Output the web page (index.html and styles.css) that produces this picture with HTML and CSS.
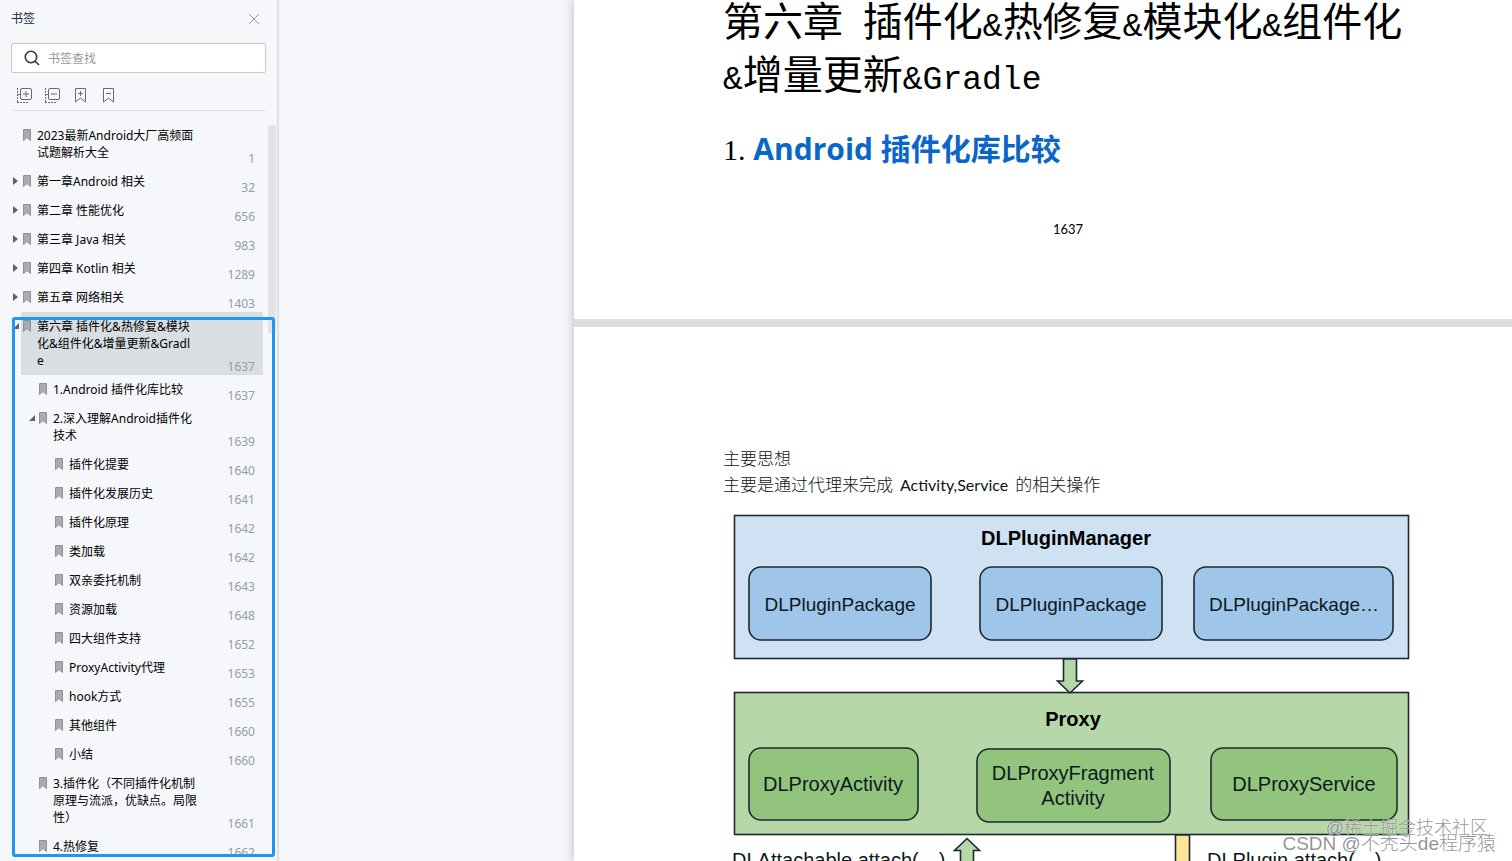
FILE: index.html
```
<!DOCTYPE html>
<html lang="zh-CN">
  <head>
    <meta charset="utf-8">
    <meta name="viewport" content="width=device-width,initial-scale=1.0">
    <title>书签</title>
    <link rel="stylesheet" href="styles.css">
  </head>
  <body>
    <!-- shared bookmark shape -->
    <svg width="0" height="0" class="defs" aria-hidden="true">
      <symbol id="mark" viewBox="0 0 8 12">
        <path d="M0.5 0.5h7v11l-3.5-3-3.5 3z" fill="#a9abaf" stroke="#8f9195"/>
      </symbol>
    </svg>

    <aside class="sidebar">
      <header class="side-head">
        <h2>书签</h2>
        <button class="icon-btn" aria-label="关闭">
          <svg width="12" height="12" viewBox="0 0 12 12" fill="none" stroke="#9b9da1"><path d="M1 1l10 10M11 1L1 11"/></svg>
        </button>
      </header>

      <label class="search">
        <svg width="16" height="16" viewBox="0 0 16 16" fill="none" stroke="#333" stroke-width="1.6"><circle cx="7" cy="7" r="5.7"/><path d="M11 11l4 4"/></svg>
        <input type="text" placeholder="书签查找" aria-label="书签查找">
      </label>

      <div class="tools">
        <button class="icon-btn" aria-label="展开">
          <svg width="15" height="15" viewBox="0 0 15 15" fill="none" stroke="#686b70"><rect x="3.5" y="0.5" width="11" height="11" rx="1.5"/><path d="M6 6h6M9 3v6"/><path d="M0.5 0v15M0 14.5h11M1 6.5h2" stroke-dasharray="2 1"/></svg>
        </button>
        <button class="icon-btn" aria-label="收起">
          <svg width="15" height="15" viewBox="0 0 15 15" fill="none" stroke="#686b70"><rect x="3.5" y="0.5" width="11" height="11" rx="1.5"/><path d="M6 6h6"/><path d="M0.5 0v15M0 14.5h11M1 6.5h2" stroke-dasharray="2 1"/></svg>
        </button>
        <button class="icon-btn" aria-label="添加书签">
          <svg width="15" height="15" viewBox="0 0 15 15" fill="none" stroke="#686b70"><path d="M2.5 0.5h10v13.5l-5-4-5 4z"/><path d="M5 5.5h5M7.5 3v5"/></svg>
        </button>
        <button class="icon-btn" aria-label="删除书签">
          <svg width="15" height="15" viewBox="0 0 15 15" fill="none" stroke="#686b70"><path d="M2.5 0.5h10v13.5l-5-4-5 4z"/><path d="M5 5.5h5"/></svg>
        </button>
      </div>

      <div class="tree-wrap">
        <ul class="tree">
          <li><a href="#"><svg><use href="#mark"/></svg><span>2023最新Android大厂高频面<br>试题解析大全</span><b>1</b></a></li>
          <li><button class="toggle" aria-label="展开"></button><a href="#"><svg><use href="#mark"/></svg><span>第一章Android 相关</span><b>32</b></a></li>
          <li><button class="toggle" aria-label="展开"></button><a href="#"><svg><use href="#mark"/></svg><span>第二章 性能优化</span><b>656</b></a></li>
          <li><button class="toggle" aria-label="展开"></button><a href="#"><svg><use href="#mark"/></svg><span>第三章 Java 相关</span><b>983</b></a></li>
          <li><button class="toggle" aria-label="展开"></button><a href="#"><svg><use href="#mark"/></svg><span>第四章 Kotlin 相关</span><b>1289</b></a></li>
          <li><button class="toggle" aria-label="展开"></button><a href="#"><svg><use href="#mark"/></svg><span>第五章 网络相关</span><b>1403</b></a></li>
          <li><button class="toggle open" aria-label="收起"></button><a href="#" class="selected"><svg><use href="#mark"/></svg><span>第六章 插件化&amp;热修复&amp;模块<br>化&amp;组件化&amp;增量更新&amp;Gradl<br>e</span><b>1637</b></a></li>
          <li class="l2"><a href="#"><svg><use href="#mark"/></svg><span>1.Android 插件化库比较</span><b>1637</b></a></li>
          <li class="l2"><button class="toggle open" aria-label="收起"></button><a href="#"><svg><use href="#mark"/></svg><span>2.深入理解Android插件化<br>技术</span><b>1639</b></a></li>
          <li class="l3"><a href="#"><svg><use href="#mark"/></svg><span>插件化提要</span><b>1640</b></a></li>
          <li class="l3"><a href="#"><svg><use href="#mark"/></svg><span>插件化发展历史</span><b>1641</b></a></li>
          <li class="l3"><a href="#"><svg><use href="#mark"/></svg><span>插件化原理</span><b>1642</b></a></li>
          <li class="l3"><a href="#"><svg><use href="#mark"/></svg><span>类加载</span><b>1642</b></a></li>
          <li class="l3"><a href="#"><svg><use href="#mark"/></svg><span>双亲委托机制</span><b>1643</b></a></li>
          <li class="l3"><a href="#"><svg><use href="#mark"/></svg><span>资源加载</span><b>1648</b></a></li>
          <li class="l3"><a href="#"><svg><use href="#mark"/></svg><span>四大组件支持</span><b>1652</b></a></li>
          <li class="l3"><a href="#"><svg><use href="#mark"/></svg><span>ProxyActivity代理</span><b>1653</b></a></li>
          <li class="l3"><a href="#"><svg><use href="#mark"/></svg><span>hook方式</span><b>1655</b></a></li>
          <li class="l3"><a href="#"><svg><use href="#mark"/></svg><span>其他组件</span><b>1660</b></a></li>
          <li class="l3"><a href="#"><svg><use href="#mark"/></svg><span>小结</span><b>1660</b></a></li>
          <li class="l2"><a href="#"><svg><use href="#mark"/></svg><span>3.插件化（不同插件化机制<br>原理与流派，优缺点。局限<br>性）</span><b>1661</b></a></li>
          <li class="l2"><a href="#"><svg><use href="#mark"/></svg><span>4.热修复</span><b>1662</b></a></li>
        </ul>
        <div class="scroll-thumb"></div>
      </div>
      <div class="frame"></div>
    </aside>

    <main class="viewer">
      <div class="pages">
        <section class="page first">
          <h1>第六章<i> </i>插件化<i>&amp;</i>热修复<i>&amp;</i>模块化<i>&amp;</i>组件化<br><i>&amp;</i>增量更新<i>&amp;Gradle</i></h1>
          <h3><span class="num">1.</span> Android 插件化库比较</h3>
          <p class="page-no">1637</p>
        </section>

        <section class="page second">
          <p>主要思想</p>
          <p>主要是通过代理来完成<span class="latin">Activity,Service</span>的相关操作</p>

          <svg class="diagram" width="690" height="400" viewBox="0 0 690 400">
            <g stroke="#1c2a30" stroke-width="1.6">
              <rect x="11.5" y="8.5" width="674" height="143" fill="#cfe2f3"/>
              <rect x="11.5" y="185.5" width="674" height="142" fill="#b6d7a8"/>
              <g fill="#9fc5e8">
                <rect x="26" y="60" width="182" height="73" rx="12"/>
                <rect x="257" y="60" width="182" height="73" rx="12"/>
                <rect x="471" y="60" width="199" height="73" rx="12"/>
              </g>
              <g fill="#93c47d">
                <rect x="26" y="241" width="169" height="72" rx="12"/>
                <rect x="254" y="242" width="193" height="73" rx="12"/>
                <rect x="488" y="241" width="186" height="72" rx="12"/>
              </g>
              <path d="M340.5 152v22h-6l12.5 12 12.5-12h-6v-22z" fill="#b6d7a8"/>
              <path d="M237.5 400v-56.500h-6l12.500-12 12.500 12h-6v56.500z" fill="#b6d7a8"/>
              <path d="M452.500 328v72h14v-72z" fill="#ffe599"/>
            </g>
            <g class="title">
              <text x="343" y="38">DLPluginManager</text>
              <text x="350" y="219">Proxy</text>
            </g>
            <g class="package">
              <text x="117" y="104">DLPluginPackage</text>
              <text x="348" y="104">DLPluginPackage</text>
              <text x="571" y="104">DLPluginPackage…</text>
            </g>
            <g class="proxy">
              <text x="110" y="284">DLProxyActivity</text>
              <text x="350" y="273">DLProxyFragment</text>
              <text x="350" y="298">Activity</text>
              <text x="581" y="284">DLProxyService</text>
            </g>
            <g class="call">
              <text x="9" y="360">DLAttachable.attach(…)</text>
              <text x="484" y="360">DLPlugin.attach(…)</text>
            </g>
          </svg>
        </section>
      </div>
    </main>

    <div class="watermark">
      <span class="site">@稀土掘金技术社区</span>
      <span class="author">CSDN @不秃头de程序猿</span>
    </div>
  </body>
</html>
```
FILE: styles.css
```
* { box-sizing: border-box; }
body { margin: 0; height: 100vh; display: flex; overflow: hidden; background: #f4f6f9; color: #000; font-family: "Noto Sans", "Noto Sans CJK SC", sans-serif; font-size: 12px; }
h1, h2, h3, p, ul { margin: 0; padding: 0; font-weight: normal; }
button { border: none; background: none; padding: 0; }
.defs { position: absolute; }
.icon-btn { display: flex; }

/* bookmarks panel */
.sidebar { position: relative; flex: none; width: 279px; display: flex; flex-direction: column; background: #f5f7fa; border-right: 2px solid #dfe1e5; }
.side-head { display: flex; justify-content: space-between; align-items: center; padding: 10px 17px 0 11px; height: 28px; }
.side-head h2 { font-size: 12px; line-height: 18px; color: #23283c; }
.search { display: flex; align-items: center; gap: 8px; height: 30px; margin: 15px 11px 0; padding-left: 12px; background: #fff; border: 1px solid #c6c8cb; border-radius: 2px; }
.search input { flex: 1; min-width: 0; border: none; outline: none; padding: 0; background: none; font: inherit; }
.search input::placeholder { color: #999; }
.tools { display: flex; gap: 13px; margin: 0 11px; padding: 15px 6px 7px; border-bottom: 1px solid #e0e3e7; }

.tree-wrap { position: relative; flex: 1; min-height: 0; overflow: hidden; padding: 10px 14px 0 13px; }
.tree { list-style: none; }
.tree li { display: flex; padding-left: 8px; line-height: 17px; }
.tree li.l2 { padding-left: 24px; }
.tree li.l3 { padding-left: 40px; }
.tree a { flex: 1; display: flex; padding: 0 8px 0 2px; color: #000; text-decoration: none; white-space: nowrap; }
.tree a.selected { background: #d9dee3; }
.tree svg { flex: none; width: 8px; height: 12px; margin: 8px 6px 0 0; }
.tree span { flex: 1; padding: 6px 0; }
.tree b { align-self: flex-end; font-weight: normal; color: #949cae; }
.toggle { width: 8px; height: 28px; margin-left: -8px; }
.toggle::before { content: ""; display: block; width: 0; border: 4px solid transparent; border-left: 5px solid #606266; border-right: none; }
.toggle.open::before { border: none; border-left: 6px solid transparent; border-bottom: 6px solid #606266; }
.scroll-thumb { position: absolute; top: 14px; right: 1px; width: 8px; height: 208px; background: #e1e3e6; border-radius: 2px; }
.frame { position: absolute; top: 317px; bottom: 4px; left: 12px; right: 2px; border: 3px solid #2196ec; border-radius: 3px; }

/* document */
.viewer { flex: 1; min-width: 0; padding-left: 295px; }
.pages { display: flex; flex-direction: column; gap: 8px; height: 100%; background: #dcdddd; box-shadow: 0 0 10px rgba(0, 0, 0, 0.25); }
.page { background: #fff; padding-left: 149px; }
.first { flex: none; height: 319px; }
.second { flex: 1; min-height: 0; overflow: hidden; padding-top: 118px; }
h1 { margin-top: -7px; font-family: "Noto Sans CJK SC", sans-serif; font-size: 40px; line-height: 53px; white-space: nowrap; }
h1 i { font-family: "Liberation Mono", monospace; font-size: 33px; line-height: 33px; font-style: normal; white-space: pre; }
h3 { margin-top: 30px; font-family: "Open Sans", "Noto Sans CJK SC", sans-serif; font-size: 30px; line-height: 40px; font-weight: bold; color: #0a67c7; white-space: nowrap; }
.num { font-family: "Liberation Serif", serif; font-weight: normal; color: #000; }
.page-no { margin-top: 49px; padding-left: 330px; font-family: Lato, sans-serif; font-size: 13px; line-height: 20px; }
.second p { font-family: "Noto Sans CJK SC", sans-serif; font-size: 17px; font-weight: 300; line-height: 26px; color: #111; white-space: nowrap; }
.latin { margin: 0 7px; font-family: Lato, sans-serif; font-size: 16px; font-weight: normal; }

.diagram { display: block; margin-top: 9px; font-family: "Liberation Sans", Arial, sans-serif; font-size: 20px; fill: #0b1a20; }
.title, .package, .proxy { text-anchor: middle; }
.title { font-weight: bold; fill: #000; }
.package { font-size: 19px; }

.watermark { position: absolute; right: 16px; bottom: 10px; display: flex; flex-direction: column; align-items: flex-end; font-family: "Liberation Sans", "Noto Sans CJK SC", sans-serif; font-weight: 300; line-height: 15px; color: rgba(120, 120, 120, 0.8); text-shadow: 0 0 1px #fff; white-space: nowrap; }
.site { font-size: 18px; padding-right: 8px; }
.author { font-size: 19px; }
```
